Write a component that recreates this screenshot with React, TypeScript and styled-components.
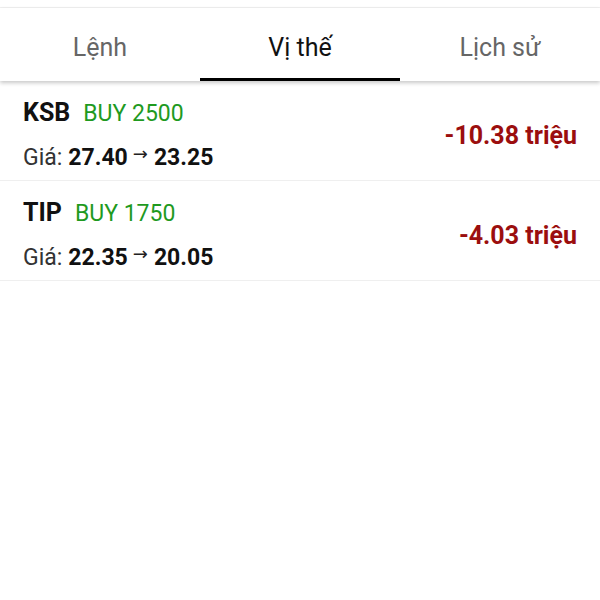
import React from "react";
import styled, { createGlobalStyle } from "styled-components";

const Global = createGlobalStyle`
  html, body { margin: 0; padding: 0; background: #ffffff; }
  body { font-family: Roboto, "Noto Sans", "Liberation Sans", sans-serif; }
`;

const Page = styled.div`
  width: 600px;
  min-height: 600px;
  background: #fff;
`;

const TopStrip = styled.div`
  height: 7px;
  border-bottom: 1px solid #f1f1f1;
`;

const TabBar = styled.div`
  position: relative;
  z-index: 1;
  display: grid;
  grid-template-columns: repeat(3, 1fr);
  height: 73px;
  background: #fff;
  box-shadow: 0 2px 4px rgba(0, 0, 0, 0.22);
`;

const Tab = styled.div<{ $active?: boolean }>`
  display: flex;
  align-items: center;
  justify-content: center;
  padding-top: 8px;
  box-sizing: border-box;
  font-size: 25px;
  color: ${(p) => (p.$active ? "#111" : "#666")};
  border-bottom: 3px solid ${(p) => (p.$active ? "#000" : "transparent")};
`;

const List = styled.div`
  display: flex;
  flex-direction: column;
`;

const Row = styled.div`
  display: flex;
  align-items: center;
  justify-content: space-between;
  height: 99px;
  box-sizing: content-box;
  padding: 0 23px 0 23px;
  border-bottom: 1px solid #efefef;
`;

const Left = styled.div`
  display: flex;
  flex-direction: column;
  gap: 15px;
  margin-top: 10px;
`;

const Line = styled.div`
  display: flex;
  align-items: baseline;
  height: 30px;
  line-height: 30px;
  white-space: nowrap;
`;

const Symbol = styled.span`
  font-size: 25px;
  font-weight: 700;
  color: #111;
  margin-right: 13px;
`;

const Side = styled.span`
  font-size: 23px;
  color: #1f9a1f;
`;

const Label = styled.span`
  font-size: 23px;
  color: #333;
  margin-right: 6px;
`;

const Price = styled.span`
  font-size: 23px;
  font-weight: 700;
  color: #111;
`;

const Arrow = styled.span`
  font-family: "DejaVu Sans", sans-serif;
  font-size: 18px;
  color: #222;
  margin: 0 6px 0 5px;
  position: relative;
  top: -5px;
`;

const PnL = styled.div`
  font-size: 25px;
  font-weight: 700;
  color: #9b0e0e;
  margin-top: 10px;
  white-space: nowrap;
`;

const positions = [
  { sym: "KSB", qty: "BUY 2500", from: "27.40", to: "23.25", pnl: "-10.38 triệu" },
  { sym: "TIP", qty: "BUY 1750", from: "22.35", to: "20.05", pnl: "-4.03 triệu" },
];

export default function App() {
  return (
    <Page>
      <Global />
      <TopStrip />
      <TabBar>
        <Tab>Lệnh</Tab>
        <Tab $active>Vị thế</Tab>
        <Tab>Lịch sử</Tab>
      </TabBar>
      <List>
        {positions.map((p) => (
          <Row key={p.sym}>
            <Left>
              <Line>
                <Symbol>{p.sym}</Symbol>
                <Side>{p.qty}</Side>
              </Line>
              <Line>
                <Label>Giá:</Label>
                <Price>{p.from}</Price>
                <Arrow>→</Arrow>
                <Price>{p.to}</Price>
              </Line>
            </Left>
            <PnL>{p.pnl}</PnL>
          </Row>
        ))}
      </List>
    </Page>
  );
}
